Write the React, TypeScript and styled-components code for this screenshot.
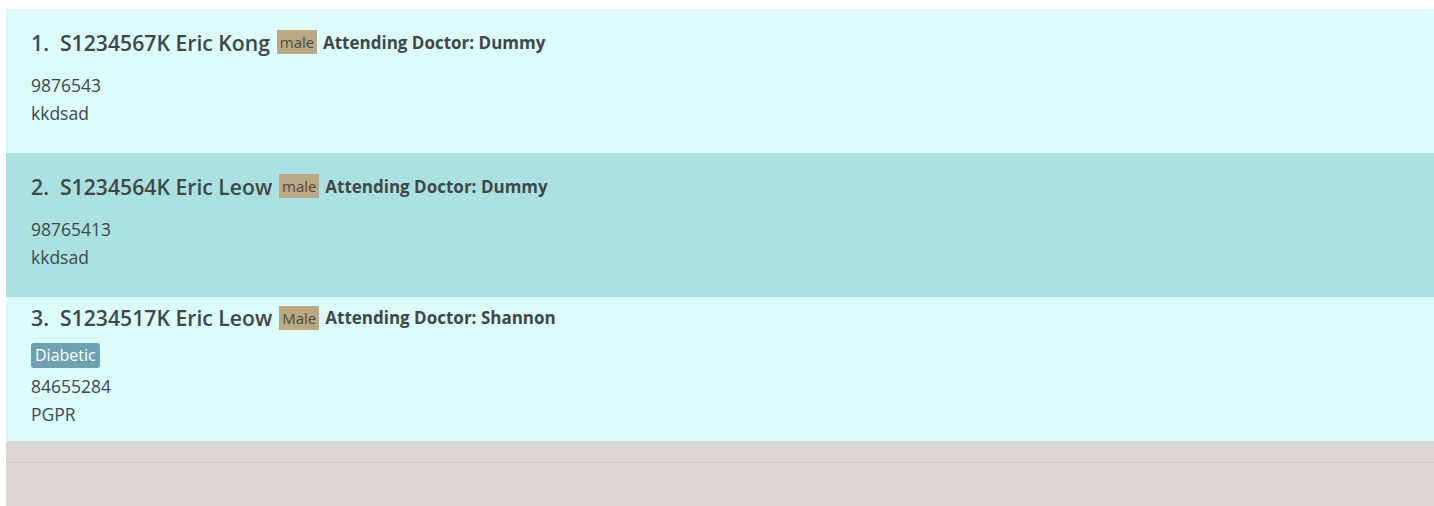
import React from 'react';
import styled, { createGlobalStyle } from 'styled-components';

const GlobalStyle = createGlobalStyle`
  html, body {
    margin: 0;
    padding: 0;
    background: #ffffff;
  }
  body {
    font-family: "Open Sans", "Noto Sans", sans-serif;
  }
`;

const ListView = styled.div`
  margin: 9px 0 0 6px;
  display: flex;
  flex-direction: column;
  background: #ddd8d6;
  height: 497px;
`;

const Card = styled.div<{ $shade: string }>`
  height: 144px;
  box-sizing: border-box;
  padding: 0 25px 7px;
  display: flex;
  flex-direction: column;
  justify-content: center;
  background: ${({ $shade }) => $shade};
  color: #3f4849;
`;

const TitleRow = styled.div`
  display: flex;
  align-items: center;
  height: 30px;
  padding-bottom: 2px;
  box-sizing: border-box;
  white-space: nowrap;
`;

const Name = styled.span`
  font-size: 21.2px;
  font-weight: 600;
  margin-right: 7px;
`;

const Gender = styled.span`
  display: inline-flex;
  align-items: center;
  justify-content: center;
  width: 40px;
  height: 24px;
  background: #b9a985;
  color: #4a4a44;
  font-size: 15px;
  margin-right: 6px;
`;

const Doctor = styled.span`
  font-size: 17px;
  font-weight: 700;
`;

const Tags = styled.div`
  display: flex;
  gap: 6px;
  padding: 9px 0 4px;
`;

const Tag = styled.span`
  display: inline-flex;
  align-items: center;
  height: 25px;
  padding: 0 4px;
  border-radius: 3px;
  background: #6ea2b2;
  color: #ffffff;
  font-size: 16px;
`;

const Line = styled.div`
  font-size: 17.5px;
  line-height: 28px;
`;

const Filler = styled.div`
  flex: 1;
  display: flex;
  flex-direction: column;
`;

const Divider = styled.div`
  height: 21px;
  border-bottom: 1px solid #c9cfcc;
`;

type Person = {
  nric: string;
  name: string;
  gender: string;
  doctor: string;
  tags: string[];
  phone: string;
  address: string;
};

const people: Person[] = [
  { nric: 'S1234567K', name: 'Eric Kong', gender: 'male', doctor: 'Dummy', tags: [], phone: '9876543', address: 'kkdsad' },
  { nric: 'S1234564K', name: 'Eric Leow', gender: 'male', doctor: 'Dummy', tags: [], phone: '98765413', address: 'kkdsad' },
  { nric: 'S1234517K', name: 'Eric Leow', gender: 'Male', doctor: 'Shannon', tags: ['Diabetic'], phone: '84655284', address: 'PGPR' },
];

const App: React.FC = () => {
  return (
    <>
      <GlobalStyle />
      <ListView>
        {people.map((p, i) => (
          <Card key={p.nric} $shade={i === 1 ? '#abe2e1' : '#dcfbfa'}>
            <TitleRow>
              <Name>{i + 1}.&nbsp;&nbsp;{p.nric} {p.name}</Name>
              <Gender>{p.gender}</Gender>
              <Doctor>Attending Doctor: {p.doctor}</Doctor>
            </TitleRow>
            <Tags>
              {p.tags.map((t) => (
                <Tag key={t}>{t}</Tag>
              ))}
            </Tags>
            <Line>{p.phone}</Line>
            <Line>{p.address}</Line>
          </Card>
        ))}
        <Filler>
          <Divider />
        </Filler>
      </ListView>
    </>
  );
};

export default App;
